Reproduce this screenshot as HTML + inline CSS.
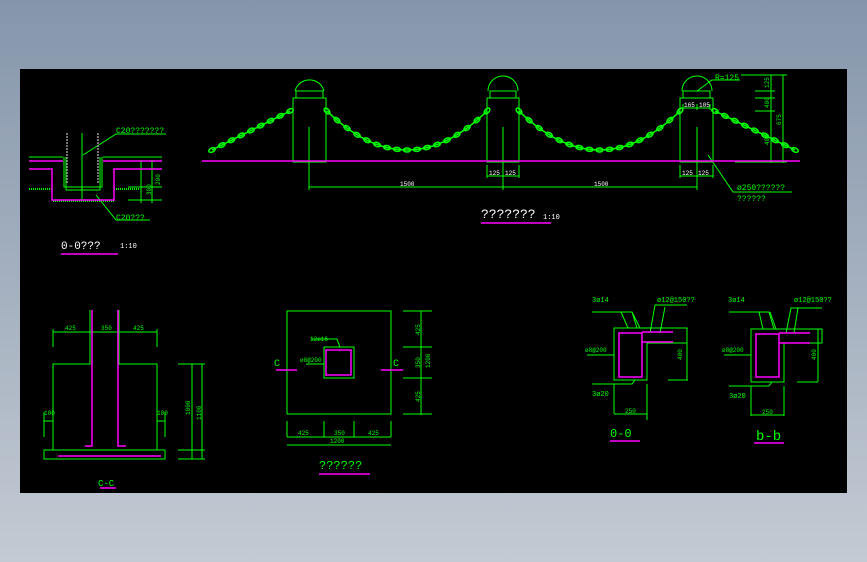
<!DOCTYPE html>
<html><head><meta charset="utf-8"><style>
html,body{margin:0;padding:0;width:867px;height:562px;overflow:hidden;background:linear-gradient(#8596ab,#c3cad3);}
svg{position:absolute;left:0;top:0}
text{font-family:"Liberation Mono",monospace;}
</style></head><body>
<svg width="867" height="562" viewBox="0 0 867 562" id="s">
<rect x="20" y="69" width="827" height="424" fill="#000"/>
<g fill="none" stroke="#00ff00" stroke-width="1" id="g">
<rect x="293" y="98" width="33" height="64"/><rect x="296" y="91" width="27" height="7"/><path d="M295 91 A15 15 0 0 1 324 91"/>
<rect x="487" y="98" width="32" height="64"/><rect x="490" y="91" width="26" height="7"/><path d="M488 91 A15 15 0 0 1 518 91"/>
<rect x="680" y="98" width="33" height="64"/><rect x="683" y="91" width="27" height="7"/><path d="M682 91 A15 15 0 0 1 712 91"/>
<path d="M697 91 L712 80 L740 80"/>
<path d="M309 127V190M503 127V190M697 127V190M309 187H697M487 165V178M503 165V178M519 165V178M487 176H519M680 165V178M697 165V178M713 165V178M680 176H713"/>
<path d="M683 104V110M697 104V110M710 104V110M683 108H710"/>
<path d="M708 155L733 192H792"/>
<path d="M741 75H787M771 75V163M783 75V163M755 91H775M755 98H775M755 111H775M735 162H787"/>
<path d="M29 157H63M103 157H162M64 157V187H102V157M66 157V190H100V157M82 133V200M83 155L116 134H166M96 195L116 220H150"/>
<path d="M141 160V203M152 160V203M128 187H162M128 200H162"/>
<path d="M53 332H157M53 329V347M157 329V347M53 450V364H90V310M119 310V364H157V450"/>
<rect x="44" y="450" width="121" height="9"/>
<path d="M178 364H205M178 450H205M178 459H205M192 364V459M202 364V459M44 421H53M44 412V437M165 412V437M157 421H165"/>
<rect x="287" y="311" width="104" height="103"/>
<rect x="324" y="347" width="30" height="31"/>
<path d="M311 339H337L340 347M306 364H324M403 311H432M403 347H432M403 378H432M403 414H432M421 311V415M287 421V437M324 421V437M354 421V437M391 421V437M287 437H391M287 445H391"/>
<path d="M614 328V380H647V343H687V328ZM592 312H632L637 328M621 312L628 328M632 312L640 328M687 305H655L650 333M665 307L660 333M592 384H632L635 380M614 384V414M647 384V420M614 414H647M687 328V380M668 380H688M587 355H614"/>
<path d="M751 329V382H784V343H822V329ZM729 312H769L774 329M759 312L763 329M770 312L776 329M822 308H791L786 333M798 308L794 333M729 386H769L772 382M751 386V416M784 386V416M751 415H784M818 329V382M797 382H818M724 355H751"/>
</g>
<g stroke="#00ff00" stroke-width="2" stroke-dasharray="1 1">
<path d="M29 189H52M114 189H139M53 201H114"/>
</g>
<g stroke="#999" stroke-width="1.5" stroke-dasharray="2 1"><path d="M67 133V183M98 133V183"/></g>
<g fill="none" stroke="#ff00ff" stroke-width="1.5">
<path d="M202 161H800"/>
<path d="M29 161H63M103 161H162M29 169H52V200H114V169H162"/>
<path d="M92 310V446H85M118 310V446H126M58 456H161"/>
<rect x="326" y="350" width="25" height="25"/>
<path d="M276 370H297M381 370H403"/>
<rect x="619" y="333" width="23" height="44"/><path d="M642 332H673M642 342H673"/>
<rect x="756" y="334" width="23" height="43"/><path d="M779 333H810M779 343H810"/>
<path d="M481 223H551M61 254H118M100 488H116M319 474H370M610 441H640M754 443H784"/>
</g>
<g fill="#fff" font-size="6">
<text x="400" y="186">1500</text><text x="594" y="186">1500</text>
<text x="489" y="175">125</text><text x="505" y="175">125</text>
<text x="682" y="175">125</text><text x="698" y="175">125</text>
<text x="684" y="107">165</text><text x="699" y="107">105</text>
<text x="543" y="219" font-size="7">1:10</text>
<text x="120" y="248" font-size="7">1:10</text>
</g>
<g fill="#00ff00" font-size="8">
<text x="715" y="80">R=125</text>
<text x="737" y="190">ø250??????</text><text x="737" y="201">??????</text>
<text x="116" y="133">C20???????</text><text x="116" y="220">C20???</text>
<text x="65" y="330" font-size="6">425</text><text x="101" y="330" font-size="6">350</text><text x="133" y="330" font-size="6">425</text>
<text x="44" y="415" font-size="6">100</text><text x="157" y="415" font-size="6">100</text>
<text x="310" y="341" font-size="6">12ø16</text><text x="300" y="362" font-size="6">ø8@200</text>
<text x="274" y="366" font-size="10">C</text><text x="393" y="366" font-size="10">C</text>
<text x="298" y="435" font-size="6">425</text><text x="334" y="435" font-size="6">350</text><text x="368" y="435" font-size="6">425</text>
<text x="330" y="443" font-size="6">1200</text>
<text x="592" y="302" font-size="7">3ø14</text><text x="657" y="302" font-size="7">ø12@150??</text>
<text x="585" y="352" font-size="6">ø8@200</text><text x="592" y="396" font-size="7">3ø20</text>
<text x="625" y="413" font-size="6">250</text>
<text x="728" y="302" font-size="7">3ø14</text><text x="794" y="302" font-size="7">ø12@150??</text>
<text x="722" y="352" font-size="6">ø8@200</text><text x="729" y="398" font-size="7">3ø20</text>
<text x="762" y="414" font-size="6">250</text>
<text x="610" y="437" font-size="12">0-0</text><text x="756" y="440" font-size="14">b-b</text>
<text x="98" y="486" font-size="9">C-C</text>
<text x="319" y="469" font-size="12">??????</text>
</g>
<g fill="#fff">
<text x="481" y="218" font-size="13">???????</text>
<text x="61" y="249" font-size="11">0-0???</text>
</g>
<g fill="#00ff00" font-size="6">
<text transform="translate(160,185) rotate(-90)">200</text>
<text transform="translate(151,195) rotate(-90)">300</text>
<text transform="translate(190,415) rotate(-90)">1000</text>
<text transform="translate(201,420) rotate(-90)">1100</text>
<text transform="translate(420,335) rotate(-90)">425</text>
<text transform="translate(420,368) rotate(-90)">350</text>
<text transform="translate(430,368) rotate(-90)">1200</text>
<text transform="translate(420,402) rotate(-90)">425</text>
<text transform="translate(682,360) rotate(-90)">400</text>
<text transform="translate(816,360) rotate(-90)">400</text>
<text transform="translate(769,88) rotate(-90)">125</text>
<text transform="translate(769,108) rotate(-90)">400</text>
<text transform="translate(769,145) rotate(-90)">400</text>
<text transform="translate(781,125) rotate(-90)">675</text>
</g>
<g id="ch" fill="none" stroke="#00ff00" stroke-width="1.5"></g>
</svg>
<script>
var ch=document.getElementById('ch'),ns='http://www.w3.org/2000/svg';
function chain(x1,y1,x2,y2,sag,n){
 var p=document.createElementNS(ns,'path'),d='';
 for(var i=0;i<=40;i++){var t=i/40,x=x1+(x2-x1)*t,y=y1+(y2-y1)*t+sag*4*t*(1-t);d+=(i?'L':'M')+x.toFixed(1)+' '+y.toFixed(1);}
 p.setAttribute('d',d);ch.appendChild(p);
 for(var i=0;i<=n;i++){var t=i/n,x=x1+(x2-x1)*t,y=y1+(y2-y1)*t+sag*4*t*(1-t);
  var dx=(x2-x1),dy=(y2-y1)+sag*4*(1-2*t),a=Math.atan2(dy,dx)*180/Math.PI;
  var e=document.createElementNS(ns,'ellipse');e.setAttribute('cx',x);e.setAttribute('cy',y);e.setAttribute('rx',3.5);e.setAttribute('ry',2);
  e.setAttribute('transform','rotate('+a+' '+x+' '+y+')');ch.appendChild(e);}
}
chain(327,111,487,111,39,16);
chain(519,111,680,111,39,16);
chain(212,150,290,111,0,8);
chain(715,111,795,150,0,8);
</script>
</body></html>
